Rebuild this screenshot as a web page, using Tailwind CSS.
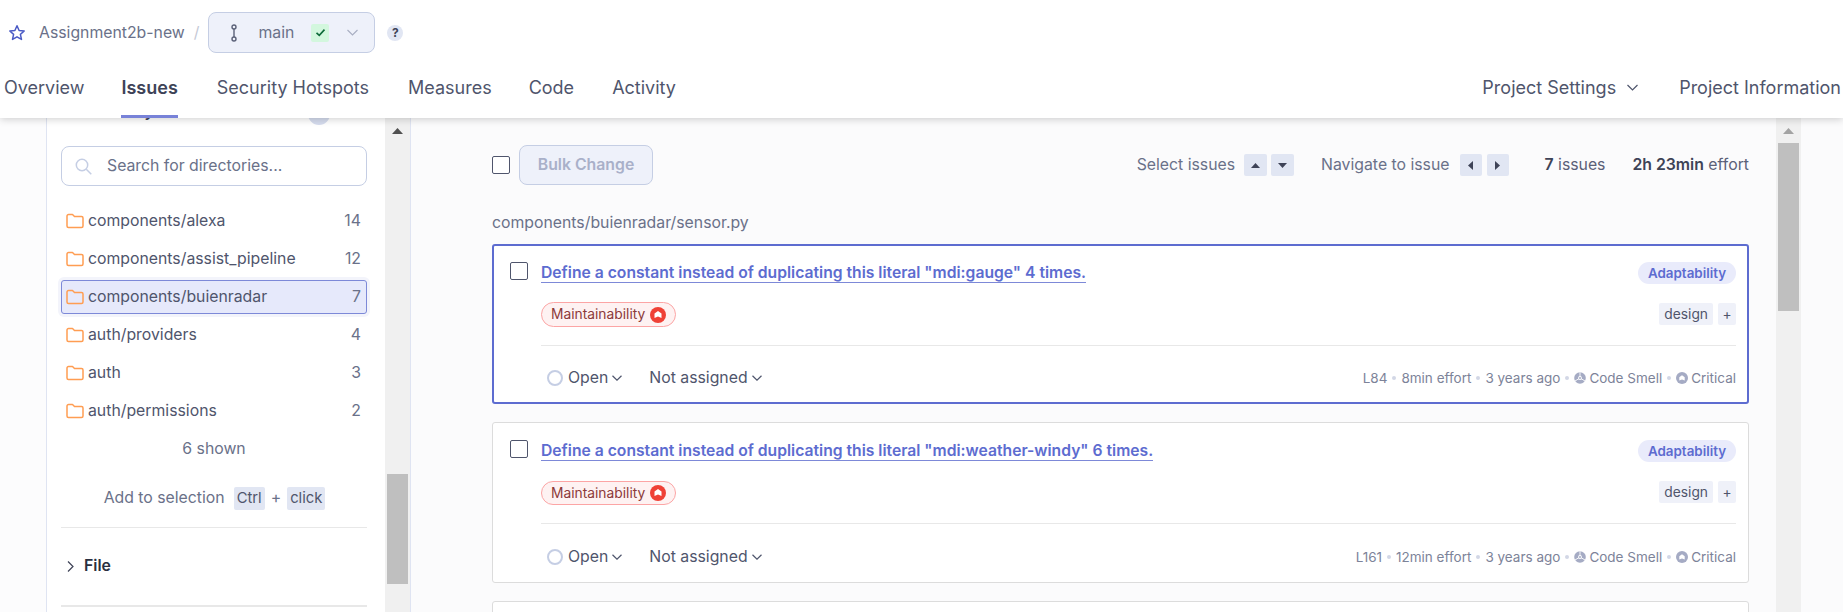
<!DOCTYPE html>
<html lang="en">
<head>
<meta charset="utf-8">
<title>Issues</title>
<script src="https://cdn.jsdelivr.net/npm/@tailwindcss/browser@4"></script>
</head>
<body class="w-[1843px] h-[612px] overflow-hidden bg-[#fcfcfd] font-['Inter',sans-serif] text-[#5b6178]">
<header class="relative z-10 h-[118px] bg-white shadow-[0_1px_8px_rgba(0,0,0,0.2)]">
  <div class="h-[65px] flex items-start">
    <div class="flex items-center h-[41px] mt-[12px] w-full">
      <svg class="ml-[8px] w-[18px] h-[18px]" viewBox="0 0 18 18" fill="none" stroke="#4b5bc5" stroke-width="1.5" stroke-linejoin="round"><path d="M9 1.800l2.100 4.700 5.100.5-3.800 3.400 1.100 5-4.500-2.600-4.500 2.600 1.100-5L1.800 7l5.100-.5z"/></svg>
      <span class="ml-[13px] text-[15.8px] text-[#6a7189]">Assignment2b-new</span>
      <span class="ml-[9px] text-[15.8px] text-[#c5c9d6]">/</span>
      <div class="ml-[9px] w-[167px] h-[41px] flex items-center rounded-[8px] border border-[#c5cee4] bg-[#eef1fa]">
        <svg class="ml-[21px] w-[8px] h-[18px]" viewBox="0 0 8 18" fill="none" stroke="#5b6178" stroke-width="1.4"><circle cx="4" cy="3" r="2"/><circle cx="4" cy="15" r="2"/><path d="M4 5v8"/></svg>
        <span class="ml-[20px] text-[15.8px] text-[#6a7189]">main</span>
        <span class="ml-[17px] w-[18px] h-[18px] flex items-center justify-center bg-[#d3f7de] rounded-[2px]">
          <svg class="w-[11px] h-[11px]" viewBox="0 0 11 11" fill="none" stroke="#0e6b3a" stroke-width="1.6"><path d="M1.500 5.800l2.800 2.600 5.200-5.800"/></svg>
        </span>
        <svg class="ml-[18px] w-[11px] h-[7px]" viewBox="0 0 11 7" fill="none" stroke="#a8aec2" stroke-width="1.1"><path d="M.5 1l5 5 5-5"/></svg>
      </div>
      <span class="ml-[12px] w-[16px] h-[16px] rounded-full bg-[#e1e6f3] flex items-center justify-center text-[12px] font-bold text-[#3e4357]">?</span>
    </div>
  </div>
  <nav class="flex items-start h-[53px] text-[18px] text-[#4f556c]">
    <a class="ml-[4px] mt-[9px]">Overview</a>
    <div class="ml-[37px] h-[53px] border-b-[3px] border-[#7882d8] pt-[9px] font-semibold text-[#3e4357]">Issues</div>
    <a class="ml-[39px] mt-[9px]">Security Hotspots</a>
    <a class="ml-[39px] mt-[9px]">Measures</a>
    <a class="ml-[37px] mt-[9px]">Code</a>
    <a class="ml-[38px] mt-[9px]">Activity</a>
    <a class="ml-auto mt-[9px]">Project Settings</a>
    <svg class="ml-[11px] mt-[19px] w-[11px] h-[7px]" viewBox="0 0 11 7" fill="none" stroke="#4f556c" stroke-width="1.2"><path d="M.5 1l5 5 5-5"/></svg>
    <a class="ml-[41px] mr-[2px] mt-[9px]">Project Information</a>
  </nav>
</header>

<div class="flex h-[494px] overflow-hidden">
  <aside class="ml-[46px] w-[365px] shrink-0 flex border-x border-[#dfe4f2] bg-white h-full overflow-hidden">
    <div class="w-[338px] shrink-0 pl-[14px] pr-[18px] text-[15.8px]">
      <div class="-mt-[18px] h-[46px] flex items-start justify-between">
        <span class="ml-[22px] font-semibold text-[#3e4357]">Directory</span>
        <span class="mt-[3px] mr-[37px] w-[22px] h-[22px] rounded-full bg-[#d5dcee]"></span>
      </div>
      <div class="h-[40px] flex items-center rounded-[8px] border border-[#c5cee4] bg-white">
        <svg class="ml-[13px] w-[17px] h-[17px]" viewBox="0 0 17 17" fill="none" stroke="#c5cee4" stroke-width="1.5"><circle cx="7" cy="7" r="5.700"/><path d="M11.300 11.300l5 5"/></svg>
        <span class="ml-[15px] text-[#6a7189]">Search for directories...</span>
      </div>
      <div class="mt-[16px] flex flex-col">
        <div class="h-[38px] flex items-center pl-[5px] pr-[6px]">
          <svg class="w-[18px] h-[16px]" viewBox="0 0 18 16" fill="none" stroke="#ff9d52" stroke-width="1.5" stroke-linejoin="round"><path d="M1 3a1.500 1.500 0 0 1 1.500-1.500h4l2 2H15.500a1.500 1.500 0 0 1 1.500 1.500V13a1.500 1.500 0 0 1-1.500 1.500h-13A1.500 1.500 0 0 1 1 13z"/></svg>
          <span class="ml-[4px] flex-1 text-[#4f556c]">components/alexa</span><span class="text-[#6a7189]">14</span>
        </div>
        <div class="h-[38px] flex items-center pl-[5px] pr-[6px]">
          <svg class="w-[18px] h-[16px]" viewBox="0 0 18 16" fill="none" stroke="#ff9d52" stroke-width="1.5" stroke-linejoin="round"><path d="M1 3a1.500 1.500 0 0 1 1.500-1.500h4l2 2H15.500a1.500 1.500 0 0 1 1.500 1.500V13a1.500 1.500 0 0 1-1.500 1.500h-13A1.500 1.500 0 0 1 1 13z"/></svg>
          <span class="ml-[4px] flex-1 text-[#4f556c]">components/assist_pipeline</span><span class="text-[#6a7189]">12</span>
        </div>
        <div class="h-[34px] my-[2px] flex items-center pl-[4px] pr-[5px] rounded-[3px] border border-[#7d89d8] bg-[#e6e9fb] shadow-[0_0_0_3px_#f3f4fb]">
          <svg class="w-[18px] h-[16px]" viewBox="0 0 18 16" fill="none" stroke="#ff9d52" stroke-width="1.5" stroke-linejoin="round"><path d="M1 3a1.500 1.500 0 0 1 1.500-1.500h4l2 2H15.500a1.500 1.500 0 0 1 1.500 1.500V13a1.500 1.500 0 0 1-1.500 1.500h-13A1.500 1.500 0 0 1 1 13z"/></svg>
          <span class="ml-[4px] flex-1 text-[#4f556c]">components/buienradar</span><span class="text-[#6a7189]">7</span>
        </div>
        <div class="h-[38px] flex items-center pl-[5px] pr-[6px]">
          <svg class="w-[18px] h-[16px]" viewBox="0 0 18 16" fill="none" stroke="#ff9d52" stroke-width="1.5" stroke-linejoin="round"><path d="M1 3a1.500 1.500 0 0 1 1.500-1.500h4l2 2H15.500a1.500 1.500 0 0 1 1.500 1.500V13a1.500 1.500 0 0 1-1.500 1.500h-13A1.500 1.500 0 0 1 1 13z"/></svg>
          <span class="ml-[4px] flex-1 text-[#4f556c]">auth/providers</span><span class="text-[#6a7189]">4</span>
        </div>
        <div class="h-[38px] flex items-center pl-[5px] pr-[6px]">
          <svg class="w-[18px] h-[16px]" viewBox="0 0 18 16" fill="none" stroke="#ff9d52" stroke-width="1.5" stroke-linejoin="round"><path d="M1 3a1.500 1.500 0 0 1 1.500-1.500h4l2 2H15.500a1.500 1.500 0 0 1 1.500 1.500V13a1.500 1.500 0 0 1-1.500 1.500h-13A1.500 1.500 0 0 1 1 13z"/></svg>
          <span class="ml-[4px] flex-1 text-[#4f556c]">auth</span><span class="text-[#6a7189]">3</span>
        </div>
        <div class="h-[38px] flex items-center pl-[5px] pr-[6px]">
          <svg class="w-[18px] h-[16px]" viewBox="0 0 18 16" fill="none" stroke="#ff9d52" stroke-width="1.5" stroke-linejoin="round"><path d="M1 3a1.500 1.500 0 0 1 1.500-1.500h4l2 2H15.500a1.500 1.500 0 0 1 1.500 1.500V13a1.500 1.500 0 0 1-1.500 1.500h-13A1.500 1.500 0 0 1 1 13z"/></svg>
          <span class="ml-[4px] flex-1 text-[#4f556c]">auth/permissions</span><span class="text-[#6a7189]">2</span>
        </div>
      </div>
      <div class="mt-[9px] text-center text-[#6a7189] leading-[20px]">6 shown</div>
      <div class="mt-[27px] h-[24px] flex items-center justify-center text-[#6a7189] text-[15.8px] pl-[1px]">
        <span>Add to selection</span>
        <kbd class="ml-[9px] px-[3px] h-[23px] leading-[23px] rounded-[2px] bg-[#e1e6f3] font-['Inter',sans-serif] text-[14.800px] text-[#4f556c]">Ctrl</kbd>
        <span class="mx-[6px]">+</span>
        <kbd class="px-[3px] h-[23px] leading-[23px] rounded-[2px] bg-[#e1e6f3] font-['Inter',sans-serif] text-[14.800px] text-[#4f556c]">click</kbd>
      </div>
      <div class="mt-[17px] h-px bg-[#e8e8e8]"></div>
      <div class="h-[77px] flex items-center pl-[6px] pb-[1px]">
        <svg class="w-[7px] h-[11px]" viewBox="0 0 7 11" fill="none" stroke="#3e4357" stroke-width="1.2"><path d="M1 .5l5 5-5 5"/></svg>
        <span class="ml-[10px] font-semibold text-[#2a2f40]">File</span>
      </div>
      <div class="h-[2px] bg-[#e8e8e8]"></div>
    </div>
    <div class="relative flex-1 bg-[#f0f0f0]">
      <svg class="absolute left-[7px] top-[10px] w-[11px] h-[6px]" viewBox="0 0 11 6" fill="#505050"><path d="M5.500 0l5.500 6H0z"/></svg>
      <div class="absolute left-[2px] top-[356px] w-[21px] h-[110px] bg-[#bfbfbf]"></div>
    </div>
  </aside>

  <main class="flex-1 min-w-0 flex bg-[#fbfbfc]">
    <div class="w-[1365px] shrink-0 pl-[81px] pr-[27px] text-[#5b6178]">
      <div class="mt-[27px] h-[40px] flex items-center text-[15.8px]">
        <span class="w-[18px] h-[18px] rounded-[2px] border border-[#4f556c] bg-white"></span>
        <button class="ml-[9px] w-[134px] h-[40px] rounded-[8px] border border-[#c5cee4] bg-[#eef1fa] font-semibold text-[#a9b0c9]">Bulk Change</button>
        <span class="ml-auto text-[#6a7189]">Select issues</span>
        <span class="ml-[9px] w-[23px] h-[22px] rounded-[2px] bg-[#e1e6f3] flex items-center justify-center"><svg class="w-[9px] h-[5px]" viewBox="0 0 9 5" fill="#3e4357"><path d="M4.500 0l4.500 5H0z"/></svg></span>
        <span class="ml-[4px] w-[23px] h-[22px] rounded-[2px] bg-[#e1e6f3] flex items-center justify-center"><svg class="w-[9px] h-[5px]" viewBox="0 0 9 5" fill="#3e4357"><path d="M0 0h9L4.500 5z"/></svg></span>
        <span class="ml-[27px] text-[#6a7189]">Navigate to issue</span>
        <span class="ml-[10px] w-[22px] h-[22px] rounded-[2px] bg-[#e1e6f3] flex items-center justify-center"><svg class="w-[5px] h-[9px]" viewBox="0 0 5 9" fill="#3e4357"><path d="M5 0v9L0 4.500z"/></svg></span>
        <span class="ml-[5px] w-[22px] h-[22px] rounded-[2px] bg-[#e1e6f3] flex items-center justify-center"><svg class="w-[5px] h-[9px]" viewBox="0 0 5 9" fill="#3e4357"><path d="M0 0v9l5-4.500z"/></svg></span>
        <span class="ml-[36px]"><b class="font-semibold text-[#3e4357]">7</b> issues</span>
        <span class="ml-[27px]"><b class="font-semibold text-[#3e4357]">2h 23min</b> effort</span>
      </div>
      <div class="mt-[27px] h-[22px] leading-[22px] text-[15.8px] text-[#6a7189]">components/buienradar/sensor.py</div>
      <div class="mt-[10px] flex flex-col gap-[18px]">

        <article class="h-[160px] shrink-0 rounded-[3px] border-2 border-[#5d6cd0] bg-white pl-[16px] pr-[11px] flex flex-col">
          <div class="mt-[16px] flex items-start">
            <span class="w-[18px] h-[18px] rounded-[2px] border border-[#4f556c] bg-white shrink-0"></span>
            <a class="ml-[13px] mt-px h-[20px] leading-[20px] text-[15.7px] font-semibold text-[#5d6cd0] border-b border-[#7d89d8]">Define a constant instead of duplicating this literal "mdi:gauge" 4 times.</a>
            <span class="ml-auto h-[22px] w-[98px] text-center leading-[22px] rounded-full bg-[#e9ebfb] text-[13.4px] font-semibold text-[#5d6cd0]">Adaptability</span>
          </div>
          <div class="mt-[18px] ml-[31px] flex items-start">
            <span class="h-[25px] px-[9px] flex items-center gap-[5px] rounded-full border border-[#fca5a5] bg-[#fef2f2] text-[13.800px] text-[#8c3a3a]">Maintainability
              <svg class="w-[16px] h-[16px]" viewBox="0 0 16 16"><circle cx="8" cy="8" r="8" fill="#ef4136"/><path d="M4.500 11V6.500L8 4l3.500 2.500V11L8 9.500z" fill="#fff"/></svg>
            </span>
            <span class="ml-auto mt-px h-[22px] px-[5px] leading-[22px] rounded-[2px] bg-[#eff1f9] text-[13.800px] text-[#4f556c]">design</span>
            <span class="ml-[5px] mt-px w-[18px] h-[22px] leading-[22px] text-center rounded-[2px] bg-[#eff1f9] text-[13.800px] text-[#4f556c]">+</span>
          </div>
          <div class="mt-[18px] ml-[31px] h-px bg-[#e8e8e8]"></div>
          <div class="ml-[37px] flex-1 flex items-center pt-[8px] text-[15.8px] text-[#4f556c]">
            <span class="w-[16px] h-[16px] rounded-full border-2 border-[#c5cee4]"></span>
            <span class="ml-[5px]">Open</span>
            <svg class="ml-[4px] w-[10px] h-[6px]" viewBox="0 0 10 6" fill="none" stroke="#4f556c" stroke-width="1.2"><path d="M.5.800L5 5.200 9.500.800"/></svg>
            <span class="ml-[27px]">Not assigned</span>
            <svg class="ml-[4px] w-[10px] h-[6px]" viewBox="0 0 10 6" fill="none" stroke="#4f556c" stroke-width="1.2"><path d="M.5.800L5 5.200 9.500.800"/></svg>
            <div class="ml-auto flex items-center gap-[5px] text-[13.500px] text-[#7d8399]">
              <span>L84</span><span class="w-[4px] h-[4px] rounded-full bg-[#d2d7e6]"></span>
              <span>8min effort</span><span class="w-[4px] h-[4px] rounded-full bg-[#d2d7e6]"></span>
              <span>3 years ago</span><span class="w-[4px] h-[4px] rounded-full bg-[#d2d7e6]"></span>
              <span class="flex items-center gap-[3px]"><svg class="w-[12px] h-[12px]" viewBox="0 0 12 12"><circle cx="6" cy="6" r="5.800" fill="#a5abc4"/><path d="M6 6V.2M6 6L1 9M6 6l5 3" stroke="#fff" stroke-width=".9"/><circle cx="6" cy="6" r="1.900" fill="#fff"/><circle cx="6" cy="6" r="1" fill="#a5abc4"/></svg>Code Smell</span><span class="w-[4px] h-[4px] rounded-full bg-[#d2d7e6]"></span>
              <span class="flex items-center gap-[3px]"><svg class="w-[12px] h-[12px]" viewBox="0 0 12 12"><circle cx="6" cy="6" r="6" fill="#a5abc4"/><path d="M3.300 8.500V5.200L6 3.200l2.700 2v3.300L6 7.500z" fill="#fff"/></svg>Critical</span>
            </div>
          </div>
        </article>

        <article class="h-[161px] shrink-0 rounded-[3px] border border-[#dcdcdc] bg-white pl-[17px] pr-[12px] flex flex-col">
          <div class="mt-[17px] flex items-start">
            <span class="w-[18px] h-[18px] rounded-[2px] border border-[#4f556c] bg-white shrink-0"></span>
            <a class="ml-[13px] mt-px h-[20px] leading-[20px] text-[15.7px] font-semibold text-[#5d6cd0] border-b border-[#7d89d8]">Define a constant instead of duplicating this literal "mdi:weather-windy" 6 times.</a>
            <span class="ml-auto h-[22px] w-[98px] text-center leading-[22px] rounded-full bg-[#e9ebfb] text-[13.4px] font-semibold text-[#5d6cd0]">Adaptability</span>
          </div>
          <div class="mt-[19px] ml-[31px] flex items-start">
            <span class="h-[24px] px-[9px] flex items-center gap-[5px] rounded-full border border-[#fca5a5] bg-[#fef2f2] text-[13.800px] text-[#8c3a3a]">Maintainability
              <svg class="w-[16px] h-[16px]" viewBox="0 0 16 16"><circle cx="8" cy="8" r="8" fill="#ef4136"/><path d="M4.500 11V6.500L8 4l3.500 2.500V11L8 9.500z" fill="#fff"/></svg>
            </span>
            <span class="ml-auto h-[22px] px-[5px] leading-[22px] rounded-[2px] bg-[#eff1f9] text-[13.800px] text-[#4f556c]">design</span>
            <span class="ml-[5px] w-[18px] h-[22px] leading-[22px] text-center rounded-[2px] bg-[#eff1f9] text-[13.800px] text-[#4f556c]">+</span>
          </div>
          <div class="mt-[18px] ml-[31px] h-px bg-[#e8e8e8]"></div>
          <div class="ml-[37px] flex-1 flex items-center pt-[8px] text-[15.8px] text-[#4f556c]">
            <span class="w-[16px] h-[16px] rounded-full border-2 border-[#c5cee4]"></span>
            <span class="ml-[5px]">Open</span>
            <svg class="ml-[4px] w-[10px] h-[6px]" viewBox="0 0 10 6" fill="none" stroke="#4f556c" stroke-width="1.2"><path d="M.5.800L5 5.200 9.500.800"/></svg>
            <span class="ml-[27px]">Not assigned</span>
            <svg class="ml-[4px] w-[10px] h-[6px]" viewBox="0 0 10 6" fill="none" stroke="#4f556c" stroke-width="1.2"><path d="M.5.800L5 5.200 9.500.800"/></svg>
            <div class="ml-auto flex items-center gap-[5px] text-[13.500px] text-[#7d8399]">
              <span>L161</span><span class="w-[4px] h-[4px] rounded-full bg-[#d2d7e6]"></span>
              <span>12min effort</span><span class="w-[4px] h-[4px] rounded-full bg-[#d2d7e6]"></span>
              <span>3 years ago</span><span class="w-[4px] h-[4px] rounded-full bg-[#d2d7e6]"></span>
              <span class="flex items-center gap-[3px]"><svg class="w-[12px] h-[12px]" viewBox="0 0 12 12"><circle cx="6" cy="6" r="5.800" fill="#a5abc4"/><path d="M6 6V.2M6 6L1 9M6 6l5 3" stroke="#fff" stroke-width=".9"/><circle cx="6" cy="6" r="1.900" fill="#fff"/><circle cx="6" cy="6" r="1" fill="#a5abc4"/></svg>Code Smell</span><span class="w-[4px] h-[4px] rounded-full bg-[#d2d7e6]"></span>
              <span class="flex items-center gap-[3px]"><svg class="w-[12px] h-[12px]" viewBox="0 0 12 12"><circle cx="6" cy="6" r="6" fill="#a5abc4"/><path d="M3.300 8.500V5.200L6 3.200l2.700 2v3.300L6 7.500z" fill="#fff"/></svg>Critical</span>
            </div>
          </div>
        </article>

        <article class="h-[100px] shrink-0 rounded-[3px] border border-[#dcdcdc] bg-white"></article>
      </div>
    </div>
    <div class="relative w-[25px] shrink-0 h-full bg-[#f0f0f0]">
      <svg class="absolute left-[7px] top-[10px] w-[11px] h-[6px]" viewBox="0 0 11 6" fill="#a3a3a3"><path d="M5.500 0l5.500 6H0z"/></svg>
      <div class="absolute left-[2px] top-[25px] w-[21px] h-[168px] bg-[#bfbfbf]"></div>
    </div>
  </main>
</div>
</body>
</html>
